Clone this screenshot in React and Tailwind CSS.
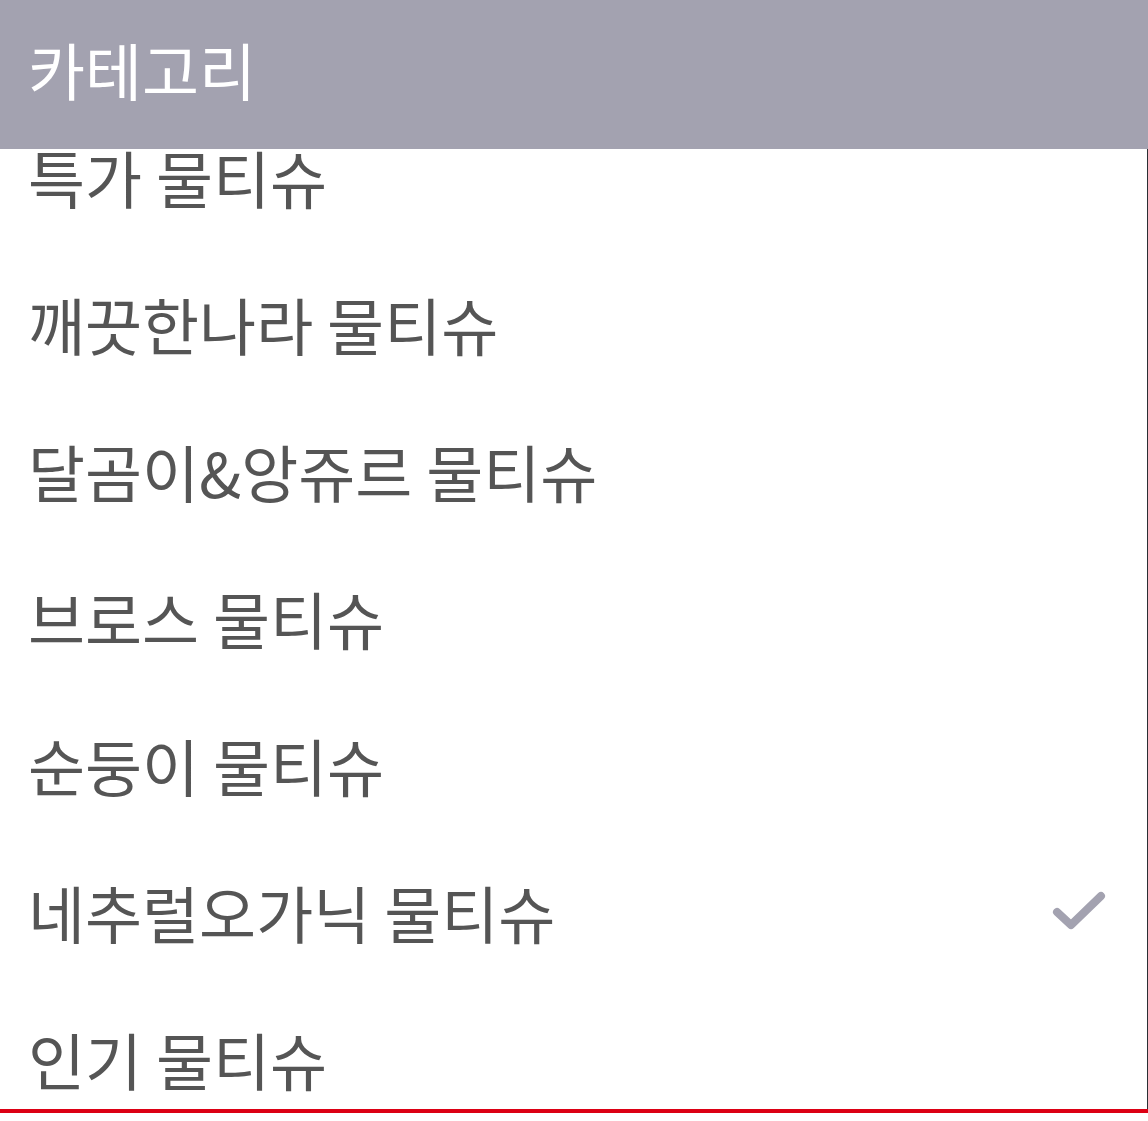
const items = [
  '특가 물티슈',
  '깨끗한나라 물티슈',
  '달곰이&앙쥬르 물티슈',
  '브로스 물티슈',
  '순둥이 물티슈',
  '네추럴오가닉 물티슈',
  '인기 물티슈',
]

const CheckIcon = () => (
  <svg width="56" height="44" viewBox="0 0 56 44" fill="none">
    <path
      d="M6 22 L20 35 L50 6"
      stroke="#a3a2b0"
      strokeWidth="8"
      strokeLinecap="round"
      strokeLinejoin="round"
    />
  </svg>
)

export default function App() {
  const selected = '네추럴오가닉 물티슈'
  return (
    <div
      className="flex h-[1121px] w-[1148px] flex-col bg-white"
      style={{ fontFamily: '"Noto Sans CJK KR", "Noto Sans", sans-serif' }}
    >
      <div className="flex h-[149px] shrink-0 items-center bg-[#a3a2b0] px-[28px] pb-[12px]">
        <h1 className="text-[62px] font-normal leading-none text-white">카테고리</h1>
      </div>
      <div className="h-[960px] shrink-0 overflow-hidden border-r border-[#2a2f33]">
        <ul className="-mt-[46px]">
          {items.map((item) => (
            <li
              key={item}
              className="flex h-[147px] items-center justify-between pl-[28px] pr-[40px]"
            >
              <span className="text-[62px] leading-none text-[#555555]">{item}</span>
              {item === selected && <CheckIcon />}
            </li>
          ))}
        </ul>
      </div>
      <div className="h-[4px] shrink-0 bg-[#dc0014]" />
    </div>
  )
}
